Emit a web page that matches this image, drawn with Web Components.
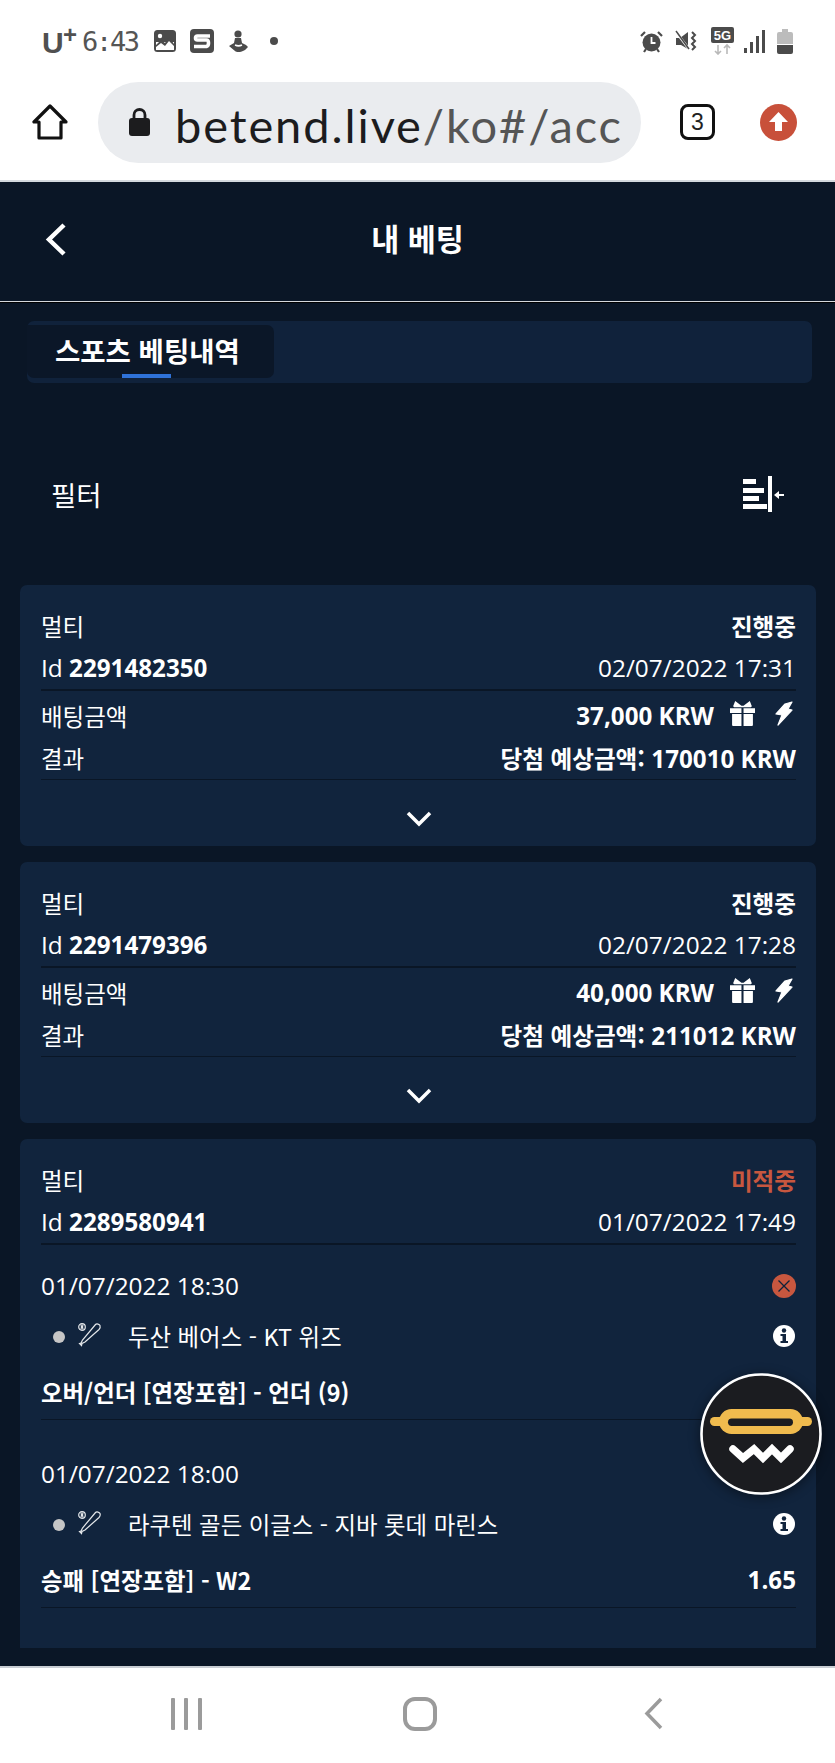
<!DOCTYPE html>
<html lang="ko"><head><meta charset="utf-8"><title>내 베팅</title>
<style>
html,body{margin:0;padding:0;height:1763px;overflow:hidden;background:#0a1626}
body{display:flex;flex-direction:column;width:835px;font-family:"Open Sans","Noto Sans CJK KR",sans-serif;color:#fff;font-size:24px}
</style></head><body>
<status-bar></status-bar>
<browser-bar></browser-bar>
<main-view>
  <app-header>내 베팅</app-header>
  <tab-strip>스포츠 베팅내역</tab-strip>
  <filter-row>필터</filter-row>
  <bet-list>
    <bet-card type="멀티" status="진행중" bid="2291482350" date="02/07/2022 17:31" amount="37,000 KRW" win="170010 KRW"></bet-card>
    <bet-card type="멀티" status="진행중" bid="2291479396" date="02/07/2022 17:28" amount="40,000 KRW" win="211012 KRW"></bet-card>
    <bet-card type="멀티" status="미적중" lost bid="2289580941" date="01/07/2022 17:49">
      <bet-pick date="01/07/2022 18:30" lost teams="두산 베어스 - KT 위즈" market="오버/언더 [연장포함] - 언더 (9)"></bet-pick>
      <bet-pick date="01/07/2022 18:00" teams="라쿠텐 골든 이글스 - 지바 롯데 마린스" market="승패 [연장포함] - W2" odds="1.65"></bet-pick>
    </bet-card>
  </bet-list>
</main-view>
<chat-fab></chat-fab>
<nav-bar></nav-bar>
<script>
const KR='"Noto Sans CJK KR","Noto Sans",sans-serif';
function def(name,html){
  customElements.define(name,class extends HTMLElement{
    connectedCallback(){
      if(this.shadowRoot)return;
      const r=this.attachShadow({mode:'open'});
      r.innerHTML=typeof html==='function'?html(this):html;
    }
  });
}
def('status-bar',`<style>
:host{display:flex;flex:none;height:82px;background:#fff;align-items:center;box-sizing:border-box;position:relative;color:#4b4b4b}
.l{display:flex;align-items:center;margin-left:42px;height:82px}
.u{font:700 30px "Liberation Sans",sans-serif;line-height:30px;color:#505050;width:22px;margin-top:4px}
.p{font:700 24px "Liberation Sans",sans-serif;line-height:24px;color:#505050;width:14px;margin-top:-12px;margin-left:-1px;margin-right:5px}
.t{font:300 27px "DejaVu Sans Mono",monospace;letter-spacing:-2.3px;width:57px;color:#555;white-space:nowrap}
svg{display:block;flex:none}
.r{display:flex;align-items:center;margin-left:auto;margin-right:42px}
</style>
<div class="l"><span class="u">U</span><span class="p">+</span><span class="t">6:43</span>
<svg style="margin-left:15px" width="22" height="22" viewBox="0 0 22 22"><rect x="1" y="1" width="20" height="20" rx="2.500" fill="#fff" stroke="#4b4b4b" stroke-width="2"/><rect x="2" y="2" width="18" height="10" fill="#4b4b4b"/><path d="M2 15l5-5 4 3 4-6 5 7v5H2z" fill="#4b4b4b"/><circle cx="6" cy="6" r="2.200" fill="#fff"/><path d="M2 17l5-4 4 3 4-5 5 5v4H2z" fill="#fff"/></svg>
<svg style="margin-left:14px" width="24" height="24" viewBox="0 0 24 24"><rect width="24" height="24" rx="4" fill="#4b4b4b"/><path d="M20 7H7.500Q5.500 7 5.500 9T7.500 11H16.500Q18.500 11 18.500 14T16.500 17.500H4" fill="none" stroke="#fff" stroke-width="3.600"/></svg>
<svg style="margin-left:14px" width="20" height="23" viewBox="0 0 20 23"><circle cx="10" cy="4" r="3.600" fill="#4b4b4b"/><path d="M7 8h6l1 5 4 2 2 2-3 3c-3 2-8 3-10 1L1 16l5-3z" fill="#4b4b4b"/><path d="M7 15c2 1 5 1 7 0" stroke="#fff" stroke-width="1.500" fill="none"/></svg>
<svg style="margin-left:22px" width="8" height="8"><circle cx="4" cy="4" r="4" fill="#4b4b4b"/></svg></div>
<div class="r">
<svg width="23" height="23" viewBox="0 0 23 23"><circle cx="11.500" cy="12.500" r="9" fill="#4b4b4b"/><path d="M11.500 7v6h4" stroke="#fff" stroke-width="1.800" fill="none"/><path d="M1 6l4-4M22 6l-4-4" stroke="#4b4b4b" stroke-width="2.200"/><path d="M4 22l2-3M19 22l-2-3" stroke="#4b4b4b" stroke-width="2.200"/></svg>
<svg style="margin-left:12px" width="23" height="23" viewBox="0 0 23 23"><path d="M1 8h4l8-6v17l-7-4H1z" fill="#4b4b4b"/><path d="M1 2l13 17" stroke="#fff" stroke-width="2.500"/><path d="M1 1l13 18" stroke="#4b4b4b" stroke-width="1.500"/><path d="M17 2l3 3-3 3 3 3-3 3 3 3-3 3" stroke="#4b4b4b" stroke-width="2" fill="none"/></svg>
<svg style="margin-left:13px" width="23" height="28" viewBox="0 0 23 28"><rect width="23" height="16" rx="2" fill="#4b4b4b"/><text x="11.500" y="13" text-anchor="middle" font-family="Liberation Sans" font-weight="700" font-size="13" fill="#fff">5G</text><path d="M7 18v9M4 24l3 3 3-3M16 27v-9M13 21l3-3 3 3" stroke="#b9b9b9" stroke-width="1.600" fill="none"/></svg>
<svg style="margin-left:10px" width="21" height="23" viewBox="0 0 21 23"><rect y="18" width="3" height="5" fill="#4b4b4b"/><rect x="6" y="12" width="3" height="11" fill="#4b4b4b"/><rect x="12" y="6" width="3" height="17" fill="#4b4b4b"/><rect x="18" y="0" width="3" height="23" fill="#4b4b4b"/></svg>
<svg style="margin-left:12px" width="16" height="25" viewBox="0 0 16 25"><path d="M5 0h6v3h3a2 2 0 0 1 2 2v10H0V5a2 2 0 0 1 2-2h3z" fill="#bcbcbc"/><path d="M0 16h16v7a2 2 0 0 1-2 2H2a2 2 0 0 1-2-2z" fill="#4b4b4b"/></svg>
</div>`);
def('browser-bar',`<style>
:host{display:flex;flex:none;height:100px;box-sizing:border-box;background:#fff;border-bottom:2px solid #d4d9de;align-items:center;padding:0 38px 18px 32px}
svg{display:block;flex:none}
.pill{display:flex;align-items:center;width:543px;height:81px;margin-left:30px;background:#eaecef;border-radius:41px;box-sizing:border-box;padding-left:30px;padding-right:21px;flex:none}
.url{font:400 47px Lato,sans-serif;white-space:nowrap;overflow:hidden;margin-left:24px;flex:1;color:#555;letter-spacing:1.900px;line-height:70px;padding-top:5px}
.url b{font-weight:400;color:#1c1c1e}
.tab{margin-left:39px;width:35px;height:36px;box-sizing:border-box;border:3.500px solid #111;border-radius:8px;font:400 23px "Liberation Sans",sans-serif;color:#222;display:flex;align-items:center;justify-content:center;flex:none}
</style>
<svg width="36" height="36" viewBox="0 0 36 36"><path d="M18 2L2 18h5v16h22V18h5z" fill="none" stroke="#111" stroke-width="3.200" stroke-linejoin="round"/></svg>
<div class="pill"><svg width="23" height="28" viewBox="0 0 23 28"><path d="M6 12V7a5.500 5.500 0 0 1 11 0v5" fill="none" stroke="#1c1c1e" stroke-width="2.800"/><rect x="1" y="10" width="21" height="18" rx="3" fill="#1c1c1e"/></svg><div class="url"><b>betend.live</b>/ko#/acc</div></div>
<div class="tab">3</div>
<svg style="margin-left:45px" width="37" height="37" viewBox="0 0 37 37"><circle cx="18.500" cy="18.500" r="18.500" fill="#c8503a"/><path d="M18.500 8L28 18h-6v9h-7v-9H9z" fill="#fff"/></svg>`);
def('main-view',`<style>:host{display:flex;flex-direction:column;flex:1;min-height:0;background:#0a1626;box-sizing:border-box;padding-bottom:18px}</style><slot></slot>`);
def('app-header',`<style>
:host{display:flex;flex:none;height:121px;box-sizing:border-box;position:relative;align-items:center;justify-content:center;border-bottom:1.500px solid #000}
.line{position:absolute;left:0;right:0;bottom:0;height:1.500px;background:#d5d8dc}
svg{position:absolute;left:45px;top:41px}
.t{font:700 30.500px ${KR};color:#fff;margin-top:-8px;line-height:40px}
</style><svg width="22" height="33" viewBox="0 0 22 33"><path d="M19 2L4 16.500 19 31" fill="none" stroke="#fff" stroke-width="4.500"/></svg><div class="t"><slot></slot></div><div class="line"></div>`);
def('tab-strip',`<style>
:host{display:flex;flex:none;height:62px;margin:18px 23px 0 27px;background:#10223b;border-radius:7px;box-sizing:border-box;padding:4px 0 5px}
.tab{width:247px;background:#0b1728;border-radius:0 7px 7px 7px;position:relative;box-sizing:border-box;padding-left:28px;font:700 27.500px/50px ${KR};color:#fff;white-space:nowrap}
i{position:absolute;left:95px;bottom:0;width:49px;height:4px;background:#2f72d8}
</style><div class="tab"><slot></slot><i></i></div>`);
def('filter-row',`<style>
:host{display:flex;flex:none;height:48px;margin:87px 0 67px;padding:0 51px 0 51px;align-items:center;justify-content:space-between;font:400 27.500px ${KR};color:#fff}
svg{display:block;margin-top:-1px}
</style><span><slot></slot></span>
<svg width="41" height="36" viewBox="0 0 41 36" fill="#fff"><rect y="3" width="13" height="5"/><rect y="12" width="21" height="5"/><rect y="20" width="16" height="5"/><rect y="28" width="24" height="5"/><rect x="25" width="4" height="36"/><path d="M31 19l5-4v3h5v2h-5v3z"/></svg>`);
def('bet-list',`<style>:host{display:flex;flex-direction:column;gap:16px;flex:1;min-height:0;overflow:hidden;margin:0 19px 0 20px}</style><slot></slot>`);
const gift=`<svg width="25" height="25" viewBox="0 0 24 24" fill="#fff"><path d="M5 0l6 4.500h2L19 0l2 5-1 1H4L3 5z"/><path d="M0 7h11v4.500H0zM13 7h11v4.500H13zM2 12.500h9V24H3a1 1 0 0 1-1-1zM13 12.500h9V23a1 1 0 0 1-1 1h-8z"/></svg>`;
const bolt=`<svg width="18" height="25" viewBox="0 0 18 25" fill="#fff" stroke="#fff" stroke-width="1.200" stroke-linejoin="round"><path d="M10 3L17 1l-4 7 4 1L3 24l4-10-6-1z"/></svg>`;
def('bet-card',h=>{
  const d=n=>h.getAttribute(n)||'';
  const lost=h.hasAttribute('lost');
  return `<style>
:host{display:block;flex:none;background:#11243d;border-radius:7px;padding:21px 20px 0 21px;box-sizing:border-box;min-height:261px}
:host([lost]){border-radius:7px 7px 0 0;min-height:520px}
.row{display:flex;justify-content:space-between;align-items:center;height:40px;white-space:nowrap}
.k{font:400 23.500px ${KR}}
.kb{font:700 23.600px ${KR}}
.o{font:400 24.400px "Open Sans",sans-serif}
.ob{font:700 24.200px "Open Sans",sans-serif}
.rule{height:1.500px;background:#0a1626}
.right{display:flex;align-items:center}
.right svg{display:block;flex:none}
.chev{display:flex;justify-content:center;height:52px;padding-top:13px;align-items:center}
:host([lost]) .st{color:#c8573f}
</style>
<div class="row"><span class="k">${d('type')}</span><span class="kb st">${d('status')}</span></div>
<div class="row" style="margin-top:2px;height:39px"><span><span class="o">Id </span><span class="ob">${d('bid')}</span></span><span class="o">${d('date')}</span></div>
<div class="rule" style="margin-top:2px"></div>
${lost?`<slot></slot>`:`
<div class="row" style="margin-top:5px"><span class="k">배팅금액</span><span class="right"><span class="ob">${d('amount')}</span><span style="margin:-4px 3px 0 16px;display:flex;gap:20px">${gift}${bolt}</span></span></div>
<div class="row" style="margin-top:2px"><span class="k">결과</span><span><span class="kb">당첨 예상금액:</span><span class="ob"> ${d('win')}</span></span></div>
<div class="rule" style="margin-top:1px"></div>
<div class="chev"><svg width="26" height="16" viewBox="0 0 26 16"><path d="M2 2l11 11L24 2" fill="none" stroke="#fff" stroke-width="3.500"/></svg></div>`}`;
});
def('bet-pick',h=>{
  const d=n=>h.getAttribute(n)||'';
  return `<style>
:host{display:block;height:188px;box-sizing:border-box;padding-top:21px}
.row{display:flex;justify-content:space-between;align-items:center;white-space:nowrap}
.date{height:40px;font:400 24.400px "Open Sans",sans-serif}
.teams{height:40px;margin-top:10px;font:400 23.400px ${KR}}
.market{height:40px;margin-top:16px;font:700 23.400px ${KR}}
.odds{font:700 24.200px "Open Sans",sans-serif}
.rule{height:1.500px;background:#0a1626;margin-top:7px}
svg{display:block;flex:none}
.lhs{display:flex;align-items:center}
</style>
<div class="row date"><span>${d('date')}</span>${h.hasAttribute('lost')?`<svg width="24" height="24" viewBox="0 0 24 24"><circle cx="12" cy="12" r="12" fill="#c8573f"/><path d="M6.500 6.500l11 11M17.500 6.500l-11 11" stroke="#0f223a" stroke-width="1.300"/></svg>`:''}</div>
<div class="row teams"><span class="lhs"><svg style="margin-left:12px;margin-top:3px" width="12" height="12"><circle cx="6" cy="6" r="6" fill="#c6c6c6"/></svg>
<svg style="margin-left:12px;margin-top:-1px" width="25" height="24" viewBox="0 0 25 24" fill="none" stroke="#e4e7ea" stroke-width="1.200"><circle cx="5" cy="4" r="3.300"/><path d="M4 1.500q1 2.500 0 5M6 1.500q-1 2.500 0 5"/><path d="M18.500 1.500c1-1 4-.5 4.500 1s0 3-1 4L8 19l-3 1.500-.5 2-2-2 1.500-.5 1.500-3z"/></svg>
<span style="margin-left:26px">${d('teams')}</span></span>
<svg style="margin-right:1px" width="22" height="22" viewBox="0 0 22 22"><circle cx="11" cy="11" r="11" fill="#fff"/><circle cx="11" cy="5.500" r="2.200" fill="#11243d"/><path d="M7.500 9h5.500v7h2v2H7.500v-2h2v-5h-2z" fill="#11243d"/></svg></div>
<div class="row market"><span>${d('market')}</span><span class="odds">${d('odds')}</span></div>
<div class="rule"></div>`;
});
def('chat-fab',`<style>
:host{position:absolute;left:700px;top:1373px;width:122px;height:122px;display:block;border-radius:50%;box-shadow:0 2px 12px rgba(0,0,0,.45)}
svg{display:block}
</style><svg width="122" height="122" viewBox="0 0 122 122"><circle cx="61" cy="61" r="59.500" fill="#1b1c20" stroke="#fff" stroke-width="2.600"/><rect x="10" y="44" width="102" height="9" rx="4.500" fill="#f0bb4e"/><rect x="19" y="36" width="84" height="25" rx="12.500" fill="#f0bb4e"/><rect x="28" y="45.500" width="65" height="7.500" rx="3.700" fill="#1b1c20"/><path d="M33 76l10 9 11-9 9 9 9-9 9 9 9-9" fill="none" stroke="#fff" stroke-width="7.500" stroke-linejoin="miter" stroke-linecap="round"/></svg>`);
def('nav-bar',`<style>
:host{display:flex;flex:none;height:97px;background:#fff;border-top:2px solid #c8cdd3;box-sizing:border-box;position:relative}
.g{display:flex;align-items:center;box-sizing:border-box}
svg{display:block;flex:none}
</style><div class="g" style="height:95px;padding-left:171px;padding-bottom:4px"><svg width="31" height="32" viewBox="0 0 31 32" fill="#9b9b9b"><rect x="0" width="4" height="32" rx="1"/><rect x="13" width="4" height="32" rx="1"/><rect x="27" width="4" height="32" rx="1"/></svg>
<svg style="margin-left:201px" width="34" height="34" viewBox="0 0 34 34"><rect x="2" y="2" width="30" height="30" rx="10" fill="none" stroke="#9b9b9b" stroke-width="4"/></svg>
<svg style="margin-left:206px" width="21" height="33" viewBox="0 0 21 33"><path d="M18 2L4 16.500 18 31" fill="none" stroke="#9b9b9b" stroke-width="3.500"/></svg></div>`);
</script>
</body></html>
